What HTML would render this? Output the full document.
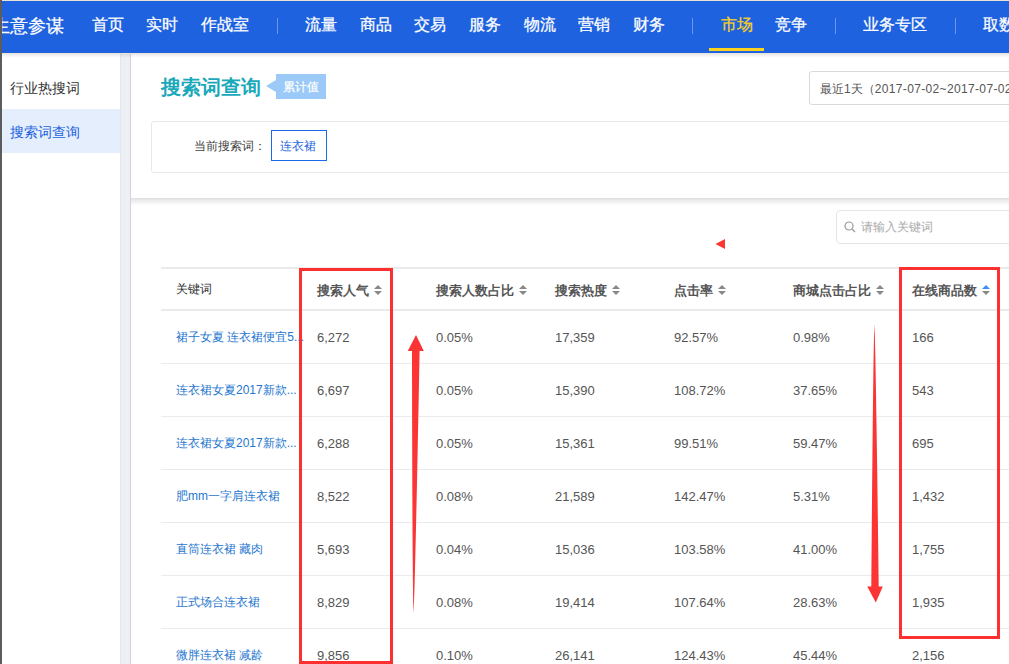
<!DOCTYPE html>
<html><head><meta charset="utf-8">
<style>
*{margin:0;padding:0;box-sizing:border-box}
html,body{width:1009px;height:664px;overflow:hidden;background:#fff;font-family:"Liberation Sans",sans-serif;color:#333}
.abs{position:absolute}
#strip{left:0;top:0;width:2px;height:664px;background:#5c5c5c;z-index:50}
#topline{left:0;top:0;width:1009px;height:1px;background:#e6e2d8;z-index:40}
#nav{left:0;top:1px;width:1009px;height:52px;background:#1e62e0;color:#fff;z-index:20}
#nav .t{position:absolute;top:0;height:52px;line-height:48px;font-size:16px;white-space:nowrap;-webkit-text-stroke:0.25px currentColor}
#nav .logo{font-size:18px;line-height:50px}
#nav .sep{position:absolute;top:17px;width:1px;height:16px;background:#6d96ea}
#nav .ul{position:absolute;left:709px;top:47px;width:55px;height:3px;background:#fcd21c}
#navshadow{left:0;top:53px;width:1009px;height:6px;background:linear-gradient(#e9e5da 0,#e9e5da 1px,rgba(0,0,0,0.09) 1px,rgba(0,0,0,0.04) 3px,rgba(0,0,0,0) 5px);z-index:15}
#side{left:2px;top:53px;width:118px;height:611px;background:#fff}
#side .it{position:absolute;left:8px;font-size:14px;line-height:44px;height:44px;white-space:nowrap}
#side .sel{left:0;top:56px;width:118px;height:44px;background:#e5eefc;position:absolute}
#gap{left:120px;top:53px;width:11px;height:611px;background:#eceff4;border-left:1px solid #e3e6eb;border-right:1px solid #d3d4d6}
#card1{left:131px;top:53px;width:878px;height:145px;background:#fff;}
#c1sh{left:131px;top:198px;width:878px;height:8px;background:linear-gradient(rgba(0,0,0,0.13),rgba(0,0,0,0.07) 35%,rgba(0,0,0,0.02) 75%,rgba(0,0,0,0))}
#card2{left:131px;top:200px;width:878px;height:464px;background:#fff}

.title{position:absolute;left:161px;top:73px;font-size:20px;font-weight:bold;color:#1aa9ba;line-height:28px;white-space:nowrap}
.tag{position:absolute;left:276px;top:74px;width:50px;height:25px;background:#9bcaf8;color:#fff;font-size:12px;line-height:27px;text-align:center;-webkit-text-stroke:0.2px #fff}
.tag:before{content:"";position:absolute;left:-10px;top:6px;border-right:10px solid #9bcaf8;border-top:6px solid transparent;border-bottom:6px solid transparent}
.dsel{position:absolute;left:809px;top:71px;width:220px;height:34px;border:1px solid #d9d9d9;border-radius:3px;font-size:12px;line-height:34px;padding-left:10px;white-space:nowrap;color:#555}
.box{position:absolute;left:151px;top:121px;width:900px;height:52px;border:1px solid #e8e8e8;border-radius:3px}
.lbl{position:absolute;left:194px;top:138px;font-size:12px;line-height:16px;color:#444;white-space:nowrap}
.btn{position:absolute;left:271px;top:130px;width:56px;height:31px;border:1px solid #1b69e6;color:#1f66e0;font-size:12px;line-height:31px;text-align:center;padding-right:2px}
.search{position:absolute;left:836px;top:210px;width:220px;height:34px;border:1px solid #e5e5e5;border-radius:4px;font-size:12px;line-height:32px;padding-left:24px;color:#aaa;white-space:nowrap}
.search svg{position:absolute;left:7px;top:10px}

.th{position:absolute;top:271px;height:40px;line-height:40px;font-size:13px;font-weight:bold;color:#555;white-space:nowrap}
.th.k{font-weight:normal;font-size:12px;color:#333;top:269px}
.srt{display:inline-block;position:relative;width:8px;height:11px;margin-left:5px;vertical-align:-1px}
.srt:before{content:"";position:absolute;left:0;top:0;border-left:4px solid transparent;border-right:4px solid transparent;border-bottom:4px solid #888}
.srt:after{content:"";position:absolute;left:0;top:6px;border-left:4px solid transparent;border-right:4px solid transparent;border-top:4px solid #888}
.srt.act:before{border-bottom-color:#3d8ef8}
.hl{position:absolute;left:161px;width:848px;background:#ebebeb}
.td{position:absolute;font-size:13px;line-height:20px;color:#555;white-space:nowrap}
.td.kw{font-size:12px;color:#1f77d0}
</style></head>
<body>
<div id="topline" class="abs"></div>
<div id="strip" class="abs"></div>
<div id="nav" class="abs">
  <span class="t logo" style="left:-8px">生意参谋</span>
  <span class="t" style="left:92px">首页</span>
  <span class="t" style="left:146px">实时</span>
  <span class="t" style="left:201px">作战室</span>
  <span class="sep" style="left:277px"></span>
  <span class="t" style="left:305px">流量</span>
  <span class="t" style="left:360px">商品</span>
  <span class="t" style="left:414px">交易</span>
  <span class="t" style="left:469px">服务</span>
  <span class="t" style="left:524px">物流</span>
  <span class="t" style="left:578px">营销</span>
  <span class="t" style="left:633px">财务</span>
  <span class="sep" style="left:692px"></span>
  <span class="t" style="left:721px;color:#fcd21c">市场</span>
  <span class="t" style="left:775px">竞争</span>
  <span class="sep" style="left:835px"></span>
  <span class="t" style="left:863px">业务专区</span>
  <span class="sep" style="left:955px"></span>
  <span class="t" style="left:983px">取数</span>
  <span class="ul"></span>
</div>
<div id="navshadow" class="abs"></div>
<div id="side" class="abs">
  <div class="it" style="top:13px">行业热搜词</div>
  <div class="sel"></div>
  <div class="it" style="top:57px;color:#2062e0">搜索词查询</div>
</div>
<div id="gap" class="abs"></div>
<div id="card2" class="abs"></div>
<div id="card1" class="abs"></div>
<div id="c1sh" class="abs"></div>

<div class="title">搜索词查询</div>
<div class="tag">累计值</div>
<div class="dsel">最近1天（<span style="letter-spacing:0.35px">2017-07-02~2017-07-02</span>）</div>
<div class="box"></div>
<div class="lbl">当前搜索词：</div>
<div class="btn">连衣裙</div>
<div class="search"><svg width="12" height="12" viewBox="0 0 12 12"><circle cx="5" cy="5" r="4" fill="none" stroke="#999" stroke-width="1.2"/><line x1="8" y1="8" x2="11" y2="11" stroke="#999" stroke-width="1.3"/></svg>请输入关键词</div>
<div class="hl" style="top:267px;height:2px"></div>
<div class="hl" style="top:309px;height:2px"></div>
<div class="th k" style="left:176px">关键词</div>
<div class="th" style="left:317px">搜索人气<span class="srt"></span></div>
<div class="th" style="left:436px">搜索人数占比<span class="srt"></span></div>
<div class="th" style="left:555px">搜索热度<span class="srt"></span></div>
<div class="th" style="left:674px">点击率<span class="srt"></span></div>
<div class="th" style="left:793px">商城点击占比<span class="srt"></span></div>
<div class="th" style="left:912px">在线商品数<span class="srt act"></span></div>
<div class="hl" style="top:363px;height:1px"></div>
<div class="td kw" style="left:176px;top:327px">裙子女夏 连衣裙便宜5...</div>
<div class="td" style="left:317px;top:328px">6,272</div>
<div class="td" style="left:436px;top:328px">0.05%</div>
<div class="td" style="left:555px;top:328px">17,359</div>
<div class="td" style="left:674px;top:328px">92.57%</div>
<div class="td" style="left:793px;top:328px">0.98%</div>
<div class="td" style="left:912px;top:328px">166</div>
<div class="hl" style="top:416px;height:1px"></div>
<div class="td kw" style="left:176px;top:380px">连衣裙女夏2017新款...</div>
<div class="td" style="left:317px;top:381px">6,697</div>
<div class="td" style="left:436px;top:381px">0.05%</div>
<div class="td" style="left:555px;top:381px">15,390</div>
<div class="td" style="left:674px;top:381px">108.72%</div>
<div class="td" style="left:793px;top:381px">37.65%</div>
<div class="td" style="left:912px;top:381px">543</div>
<div class="hl" style="top:469px;height:1px"></div>
<div class="td kw" style="left:176px;top:433px">连衣裙女夏2017新款...</div>
<div class="td" style="left:317px;top:434px">6,288</div>
<div class="td" style="left:436px;top:434px">0.05%</div>
<div class="td" style="left:555px;top:434px">15,361</div>
<div class="td" style="left:674px;top:434px">99.51%</div>
<div class="td" style="left:793px;top:434px">59.47%</div>
<div class="td" style="left:912px;top:434px">695</div>
<div class="hl" style="top:522px;height:1px"></div>
<div class="td kw" style="left:176px;top:486px">肥mm一字肩连衣裙</div>
<div class="td" style="left:317px;top:487px">8,522</div>
<div class="td" style="left:436px;top:487px">0.08%</div>
<div class="td" style="left:555px;top:487px">21,589</div>
<div class="td" style="left:674px;top:487px">142.47%</div>
<div class="td" style="left:793px;top:487px">5.31%</div>
<div class="td" style="left:912px;top:487px">1,432</div>
<div class="hl" style="top:575px;height:1px"></div>
<div class="td kw" style="left:176px;top:539px">直筒连衣裙 藏肉</div>
<div class="td" style="left:317px;top:540px">5,693</div>
<div class="td" style="left:436px;top:540px">0.04%</div>
<div class="td" style="left:555px;top:540px">15,036</div>
<div class="td" style="left:674px;top:540px">103.58%</div>
<div class="td" style="left:793px;top:540px">41.00%</div>
<div class="td" style="left:912px;top:540px">1,755</div>
<div class="hl" style="top:628px;height:1px"></div>
<div class="td kw" style="left:176px;top:592px">正式场合连衣裙</div>
<div class="td" style="left:317px;top:593px">8,829</div>
<div class="td" style="left:436px;top:593px">0.08%</div>
<div class="td" style="left:555px;top:593px">19,414</div>
<div class="td" style="left:674px;top:593px">107.64%</div>
<div class="td" style="left:793px;top:593px">28.63%</div>
<div class="td" style="left:912px;top:593px">1,935</div>
<div class="td kw" style="left:176px;top:645px">微胖连衣裙 减龄</div>
<div class="td" style="left:317px;top:646px">9,856</div>
<div class="td" style="left:436px;top:646px">0.10%</div>
<div class="td" style="left:555px;top:646px">26,141</div>
<div class="td" style="left:674px;top:646px">124.43%</div>
<div class="td" style="left:793px;top:646px">45.44%</div>
<div class="td" style="left:912px;top:646px">2,156</div>
<svg class="abs" style="left:0;top:0;z-index:30" width="1009" height="664" viewBox="0 0 1009 664">
<g fill="none" stroke="#fc3030" stroke-width="3">
<rect x="300.5" y="269.5" width="91" height="393"/>
<rect x="900.5" y="268.5" width="98" height="369"/>
</g>
<g fill="#fb3434">
<polygon points="715.5,244 725,239 725,249"/>
<path d="M413.50,613.50 L414.01,602.56 L414.36,591.62 L414.67,580.69 L414.97,569.75 L415.25,558.81 L415.51,547.88 L415.77,536.94 L416.03,526.00 L416.28,515.06 L416.52,504.12 L416.76,493.19 L416.99,482.25 L417.22,471.31 L417.45,460.38 L417.67,449.44 L417.89,438.50 L418.11,427.56 L418.33,416.62 L418.55,405.69 L418.76,394.75 L418.97,383.81 L419.18,372.88 L419.39,361.94 L419.60,351.00 L423.80,351.00 L416.00,335.00 L407.80,351.00 L412.00,351.00 L412.02,361.94 L412.03,372.88 L412.05,383.81 L412.07,394.75 L412.09,405.69 L412.12,416.62 L412.14,427.56 L412.17,438.50 L412.20,449.44 L412.24,460.38 L412.27,471.31 L412.31,482.25 L412.35,493.19 L412.40,504.12 L412.45,515.06 L412.51,526.00 L412.57,536.94 L412.64,547.88 L412.71,558.81 L412.80,569.75 L412.90,580.69 L413.02,591.62 L413.19,602.56 L413.50,613.50 Z"/>
<path d="M874.40,324.00 L874.82,334.94 L875.10,345.88 L875.34,356.82 L875.56,367.77 L875.76,378.71 L875.95,389.65 L876.14,400.59 L876.31,411.53 L876.49,422.48 L876.65,433.42 L876.82,444.36 L876.98,455.30 L877.13,466.24 L877.29,477.18 L877.44,488.12 L877.59,499.07 L877.73,510.01 L877.88,520.95 L878.02,531.89 L878.16,542.83 L878.29,553.78 L878.43,564.72 L878.57,575.66 L878.70,586.60 L882.80,586.60 L875.80,602.60 L867.20,586.60 L871.30,586.60 L871.38,575.66 L871.47,564.72 L871.56,553.78 L871.64,542.83 L871.73,531.89 L871.82,520.95 L871.92,510.01 L872.01,499.07 L872.11,488.12 L872.21,477.18 L872.32,466.24 L872.42,455.30 L872.53,444.36 L872.65,433.42 L872.76,422.48 L872.89,411.53 L873.01,400.59 L873.15,389.65 L873.29,378.71 L873.44,367.77 L873.61,356.82 L873.80,345.88 L874.03,334.94 L874.40,324.00 Z"/>
</g>
</svg>
</body></html>
